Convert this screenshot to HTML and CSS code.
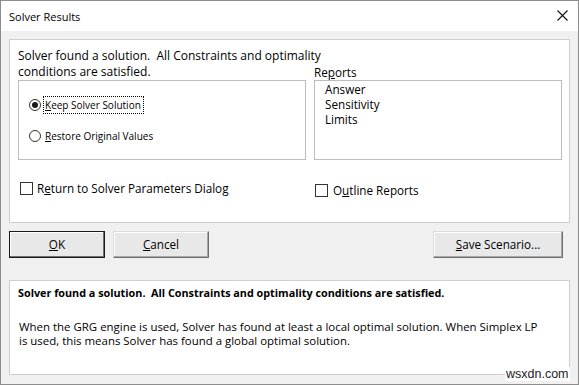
FILE: index.html
```html
<!DOCTYPE html>
<html>
<head>
<meta charset="utf-8">
<title>Solver Results</title>
<link rel="stylesheet" href="styles.css">
</head>
<body>
<div class="window">
  <div class="titlebar">
    <span class="title">Solver Results</span>
    <svg class="close" width="11" height="11" viewBox="0 0 11 11"><path d="M0.5 0.5 L10.5 10.5 M10.5 0.5 L0.5 10.5" stroke="#111" stroke-width="1.1" fill="none"/></svg>
  </div>
  <div class="client">
    <div class="panel top-panel">
      <div class="grid">
        <p class="heading">Solver found a solution.&nbsp; All Constraints and optimality<br>conditions are satisfied.</p>
        <div class="reports-label">Re<u>p</u>orts</div>
        <div class="groupbox">
          <div class="radio-row first">
            <span class="radio checked"></span>
            <span class="radio-text focus"><u>K</u>eep Solver Solution</span>
          </div>
          <div class="radio-row">
            <span class="radio"></span>
            <span class="radio-text"><u>R</u>estore Original Values</span>
          </div>
        </div>
        <div class="listbox">
          <div class="item">Answer</div>
          <div class="item">Sensitivity</div>
          <div class="item">Limits</div>
        </div>
        <div class="check-row left"><span class="checkbox"></span><span>R<u>e</u>turn to Solver Parameters Dialog</span></div>
        <div class="check-row right"><span class="checkbox"></span><span>O<u>u</u>tline Reports</span></div>
      </div>
    </div>
    <div class="buttons">
      <button class="btn default"><u>O</u>K</button>
      <button class="btn"><u>C</u>ancel</button>
      <span class="spacer"></span>
      <button class="btn wide"><u>S</u>ave Scenario...</button>
    </div>
    <div class="panel bottom-panel">
      <p class="msg-bold">Solver found a solution.&nbsp; All Constraints and optimality conditions are satisfied.</p>
      <p class="msg">When the GRG engine is used, Solver has found at least a local optimal solution. When Simplex LP<br>is used, this means Solver has found a global optimal solution.</p>
    </div>
  </div>
  <div class="watermark">wsxdn.com</div>
</div>
</body>
</html>
```
FILE: styles.css
```css
* { box-sizing: border-box; }
html, body { margin: 0; padding: 0; }
body {
  width: 579px;
  height: 385px;
  overflow: hidden;
  font-family: "Open Sans", "Noto Sans", sans-serif;
  font-size: 11.7px;
  color: #000;
  background: #f0f0f0;
}
.window {
  position: relative;
  width: 579px;
  height: 385px;
  border: 1px solid #8c8c8c;
  background: #f0f0f0;
  display: flex;
  flex-direction: column;
}
.titlebar {
  height: 30px;
  background: #fff;
  display: flex;
  align-items: center;
  justify-content: space-between;
  padding: 0 10px 0 8px;
}
.title {
  font-size: 11px;
  line-height: 15px;
}
.close { display: block; margin-top: -1px; }
.client {
  padding: 8px 8px 0 8px;
  display: flex;
  flex-direction: column;
}
.panel {
  background: #fff;
  border: 1px solid #cfcfcf;
}
.top-panel {
  height: 184px;
  padding: 8px 7px 0 8px;
}
.grid {
  display: grid;
  grid-template-columns: 288px 248px;
  grid-template-rows: 32px 80px auto;
  column-gap: 8px;
  row-gap: 0;
}
.heading {
  margin: 0;
  font-size: 12px;
  line-height: 16px;
  white-space: nowrap;
}
.reports-label {
  align-self: end;
  line-height: 16px;
}
.groupbox {
  border: 1px solid #bdbdbd;
  padding: 15px 0 0 10px;
  display: flex;
  flex-direction: column;
  gap: 13px;
}
.radio-row {
  display: flex;
  align-items: center;
  height: 18px;
}
.radio {
  width: 12px;
  height: 12px;
  border: 1px solid #333;
  border-radius: 50%;
  background: #fff;
  display: flex;
  align-items: center;
  justify-content: center;
  margin-right: 2px;
}
.radio.checked::after {
  content: "";
  width: 6px;
  height: 6px;
  border-radius: 50%;
  background: #1a1a1a;
}
.radio-text {
  font-size: 10px;
  line-height: 16px;
  border: 1px dotted transparent;
  padding: 0 2px 0 1px;
}
.radio-text.focus { border-color: #000; }
.listbox {
  border: 1px solid #bdbdbd;
  padding: 1px 0 0 10px;
}
.item { line-height: 15px; }
.check-row {
  display: flex;
  align-items: center;
  line-height: 15px;
  margin-top: 19px;
}
.check-row.left { padding-left: 2px; }
.check-row.right { padding-left: 1px; margin-top: 23px; }
.checkbox {
  width: 13px;
  height: 13px;
  border: 1px solid #333;
  background: #fff;
  margin-right: 4px;
}
.check-row.right .checkbox { margin-right: 5px; }
.buttons {
  display: flex;
  gap: 8px;
  margin-top: 8px;
  margin-right: 7px;
  height: 27px;
}
.spacer { flex: 1; }
.btn {
  font-family: inherit;
  font-size: 11.7px;
  color: #000;
  width: 96px;
  height: 27px;
  padding: 0;
  background: #e8e8e8;
  border: 1px solid;
  border-color: #dcdcdc #6e6e6e #6e6e6e #dcdcdc;
  box-shadow: inset -1px -1px 0 #a8a8a8, inset 1px 1px 0 #fdfdfd;
  line-height: 15px;
}
.btn.default {
  border: 1px solid #1a1a1a;
  box-shadow: inset -1px -1px 0 #6e6e6e, inset 1px 1px 0 #fdfdfd;
}
.btn.wide { width: 130px; }
.bottom-panel {
  margin-top: 22px;
  height: 95px;
  padding: 5px 8px 0 8px;
}
.msg-bold {
  margin: 0;
  font-weight: 700;
  font-size: 10.8px;
  line-height: 14px;
}
.msg {
  margin: 20px 0 0 1px;
  font-size: 11.45px;
  line-height: 14px;
  white-space: nowrap;
}
.watermark {
  position: absolute;
  left: 504px;
  top: 366px;
  font-family: "Liberation Sans", Arial, sans-serif;
  font-size: 12.5px;
  line-height: 14px;
  color: #222;
  background: #fff;
  padding: 0 1px;
}
```
